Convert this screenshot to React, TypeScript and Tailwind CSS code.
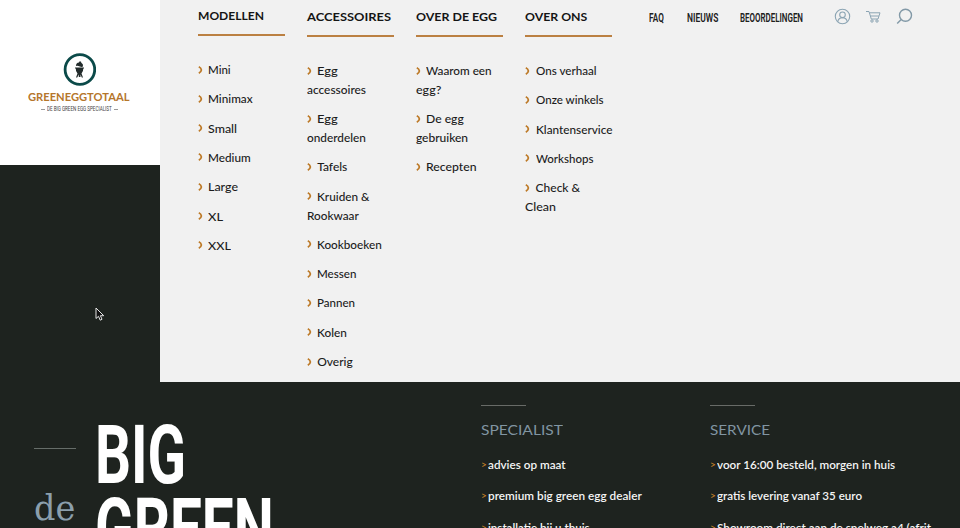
import { useLayoutEffect, useRef, useState } from "react";

// Sets a line of text to an exact width by condensing or widening it horizontally.
function Fit({ text, width, className = "" }: { text: string; width: number; className?: string }) {
  const ref = useRef<HTMLSpanElement>(null);
  const [scale, setScale] = useState(1);
  useLayoutEffect(() => {
    if (ref.current) setScale(width / ref.current.offsetWidth);
  }, [text, width]);
  return (
    <span className={`inline-block whitespace-nowrap ${className}`} style={{ width }}>
      <span ref={ref} className="inline-block origin-left" style={{ transform: `scaleX(${scale})` }}>
        {text}
      </span>
    </span>
  );
}

type Line = [string, number];
type Column = { title: Line; items: Line[][] };

const columns: Column[] = [
  {
    title: ["MODELLEN", 66],
    items: [
      [["Mini", 23]],
      [["Minimax", 45]],
      [["Small", 29]],
      [["Medium", 43]],
      [["Large", 30]],
      [["XL", 15]],
      [["XXL", 23]],
    ],
  },
  {
    title: ["ACCESSOIRES", 84],
    items: [
      [["Egg", 20.5], ["accessoires", 59.5]],
      [["Egg", 20.5], ["onderdelen", 59]],
      [["Tafels", 30]],
      [["Kruiden &", 52], ["Rookwaar", 52]],
      [["Kookboeken", 64.5]],
      [["Messen", 39.5]],
      [["Pannen", 38.5]],
      [["Kolen", 29.5]],
      [["Overig", 36]],
    ],
  },
  {
    title: ["OVER DE EGG", 81],
    items: [
      [["Waarom een", 65.5], ["egg?", 25]],
      [["De egg", 37.5], ["gebruiken", 52]],
      [["Recepten", 51]],
    ],
  },
  {
    title: ["OVER ONS", 62],
    items: [
      [["Ons verhaal", 61]],
      [["Onze winkels", 67.5]],
      [["Klantenservice", 76.5]],
      [["Workshops", 57.5]],
      [["Check &", 45], ["Clean", 31]],
    ],
  },
];

const usps: { title: Line; items: Line[] }[] = [
  {
    title: ["SPECIALIST", 82],
    items: [
      ["advies op maat", 78],
      ["premium big green egg dealer", 154],
      ["installatie bij u thuis", 102],
    ],
  },
  {
    title: ["SERVICE", 60],
    items: [
      ["voor 16:00 besteld, morgen in huis", 178],
      ["gratis levering vanaf 35 euro", 145],
      ["Showroom direct aan de snelweg a4 (afrit", 214],
    ],
  },
];

function Chevron() {
  return (
    <svg className="mr-[5.5px] inline-block h-[8px] w-[5px] align-[0.5px]" viewBox="0 0 5 8" fill="none" stroke="#bd7a28" strokeWidth="1.8">
      <path d="M.8 .8 Q3.2 2 3.4 4 Q3.2 6 .8 7.2" />
    </svg>
  );
}

function MenuColumn({ column, first }: { column: Column; first: boolean }) {
  return (
    <div className={`w-[87px] ${first ? "" : "pt-px"}`}>
      <h2 className="h-[25px] pt-[8px] text-[11.5px] leading-[16px] font-bold text-[#151515]">
        <Fit text={column.title[0]} width={column.title[1]} />
      </h2>
      <div className="mt-[9px] h-[2px] bg-[#bb8042]" />
      <ul className="mt-[25.1px] text-[12px] leading-[18.9px] font-medium text-[#1c1c1c]">
        {column.items.map((lines, i) => (
          <li key={i} className="mb-[10.4px]">
            {lines.map(([text, width], j) => (
              <div key={j} className="h-[18.9px] whitespace-nowrap">
                {j === 0 && <Chevron />}
                <Fit text={text} width={width} />
              </div>
            ))}
          </li>
        ))}
      </ul>
    </div>
  );
}

function Logo() {
  return (
    <div className="flex h-[165px] w-[160px] flex-col items-center bg-white pt-[53px] pr-[2px]">
      <svg className="h-[33px] w-[33px]" viewBox="0 0 33 33">
        <circle cx="16.9" cy="16.5" r="14.8" fill="#fff" stroke="#0b4a49" strokeWidth="2.8" />
        <path d="M13 13 Q13 9.5 16 9.5 L16.3 8.5 H18 L18.3 9.7 Q20.5 11 20 13.4 L18.5 14 L14.5 12.7Z" fill="#222b2b" />
        <path d="M12 14.5 H21 V15.5 H20.3 Q20.3 19 18.5 20.4 L20 24.5 H18.8 L17.5 21.5 V24 H15.8 V21.5 L14.2 24.5 H13 L14.5 20.4 Q12.6 19 12.8 15.5 H12Z" fill="#222b2b" />
      </svg>
      <div className="mt-[5px] h-[13px] text-[10.5px] leading-[13px] font-bold text-[#b5762b]">
        <Fit text="GREENEGGTOTAAL" width={102} />
      </div>
      <div className="mt-[1px] flex h-[8px] items-center gap-[2px] text-[6.5px] leading-[8px] font-normal text-[#444]">
        <span className="h-px w-[4px] bg-[#999]" />
        <Fit text="DE BIG GREEN EGG SPECIALIST" width={65} className="font-[Roboto]" />
        <span className="h-px w-[4px] bg-[#999]" />
      </div>
    </div>
  );
}

function TopLinks() {
  return (
    <div className="ml-[37px] flex h-[34px] items-start text-[12px] leading-[16px] font-semibold text-[#202020]">
      <div className="flex gap-[22.5px] pt-[10px] font-[Roboto]">
        <Fit text="FAQ" width={15} />
        <Fit text="NIEUWS" width={31} />
        <Fit text="BEOORDELINGEN" width={63} />
      </div>
      <svg className="mt-[8px] ml-[31px] h-[17px] w-[17px]" viewBox="0 0 17 17" fill="none" stroke="#8ba4b3" strokeWidth="1.1">
        <circle cx="8.5" cy="8.5" r="7.2" />
        <circle cx="8.5" cy="6.8" r="2.8" />
        <path d="M3.8 13.7 C4.2 10.9 6 9.7 8.5 9.7 S12.8 10.9 13.2 13.7" />
      </svg>
      <svg className="mt-[9px] ml-[14px] h-[15px] w-[17px]" viewBox="0 0 17 15" fill="none" stroke="#8ba4b3" strokeWidth="1">
        <path d="M1 2.5 H4 L6.3 10 H13 L15 3.8 H4.6 M5.4 7 H13.8" />
        <circle cx="7" cy="12" r="1.2" />
        <circle cx="12" cy="12" r="1.2" />
      </svg>
      <svg className="mt-[8px] ml-[13.5px] h-[17px] w-[17px]" viewBox="0 0 17 17" fill="none" stroke="#8299a7" strokeWidth="1.4">
        <circle cx="9.5" cy="7.2" r="6" />
        <path d="M5.2 11.5 L1.2 15.5" />
      </svg>
    </div>
  );
}

export default function App() {
  return (
    <div className="relative h-[528px] w-[960px] overflow-hidden bg-[#1e231f] font-[Lato,sans-serif]">
      <section className="flex h-[382px]">
        <aside className="w-[160px]">
          <Logo />
        </aside>
        <nav className="flex flex-1 bg-[#f1f1f1] pl-[37.5px]">
          <div className="flex gap-[22.2px]">
            {columns.map((c, i) => (
              <MenuColumn key={i} column={c} first={i === 0} />
            ))}
          </div>
          <TopLinks />
        </nav>
      </section>

      <section className="flex h-[146px] overflow-hidden">
        <div className="flex w-[481px] pl-[34px]">
          <div className="w-[60px]">
            <div className="mt-[65.5px] h-px w-[42px] bg-[#666d69]" />
            <div className="mt-[35px] font-['DejaVu_Serif',serif] text-[36px] leading-[48px] text-[#8b9fac]">
              <Fit text="de" width={41} />
            </div>
          </div>
          <h1 className="mt-[37px] flex flex-col pl-[0.5px] font-[Roboto] text-[82px] leading-[73px] font-bold text-white">
            <Fit text="BIG" width={91} className="h-[73px]" />
            <Fit text="GREEN" width={179} className="h-[73px]" />
          </h1>
        </div>
        {usps.map((u, i) => (
          <div key={i} className="w-[229px] shrink-0 pt-[22.5px]">
            <div className="h-px w-[45px] bg-[#686b67]" />
            <h3 className="mt-[14px] h-[20px] text-[13.5px] leading-[20px] font-normal text-[#8195a2]">
              <Fit text={u.title[0]} width={u.title[1]} />
            </h3>
            <ul className="mt-[9px] text-[12px] leading-[31.7px] font-semibold text-[#f4f4f4]">
              {u.items.map(([text, width]) => (
                <li key={text} className="flex h-[31.7px] items-center whitespace-nowrap">
                  <span className="w-[7px] text-[10px] text-[#c58027]">&gt;</span>
                  <Fit text={text} width={width} />
                </li>
              ))}
            </ul>
          </div>
        ))}
      </section>

      {/* Mouse pointer above the page */}
      <svg className="absolute top-[307px] left-[95px] h-[15px] w-[10px]" viewBox="0 0 10 15">
        <path d="M1 1 V11.5 L3.5 9.3 L5.2 13.2 L7 12.3 L5.4 8.7 H8.7Z" fill="#111" stroke="#e6e6e6" strokeWidth="1" />
      </svg>
    </div>
  );
}
